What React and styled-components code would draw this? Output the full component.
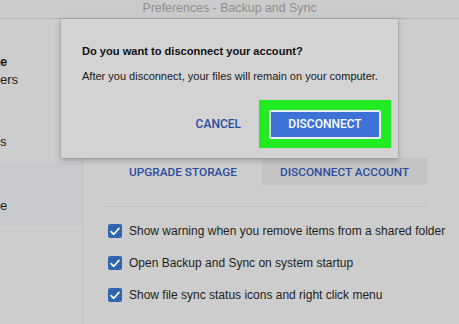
import styled, { createGlobalStyle } from "styled-components";

const GlobalStyle = createGlobalStyle`
    html, body {
        margin: 0;
        padding: 0;
        background-color: #cdcdcd;
    }
    * {
        box-sizing: border-box;
    }
`

const checks = [
    "Show warning when you remove items from a shared folder",
    "Open Backup and Sync on system startup",
    "Show file sync status icons and right click menu"
];

function CheckIcon() {
    return (
        <svg width="10" height="9" viewBox="0 0 10 9">
            <path d="M1 4.6 L3.8 7.3 L9 1.4" fill="none" stroke="#ffffff" strokeWidth="1.6" strokeLinecap="round" strokeLinejoin="round" />
        </svg>
    )
}

export default function App() {
    return (
        <Window>
            <GlobalStyle />
            <TitleBar>Preferences - Backup and Sync</TitleBar>
            <Body>
                <Sidebar>
                    <SideItem top={36}>
                        <b>e</b>
                        <span>ers</span>
                    </SideItem>
                    <SideItem top={48}>
                        <span>s</span>
                    </SideItem>
                    <SideItem top={14} selected>
                        <span>e</span>
                    </SideItem>
                </Sidebar>

                <Content>
                    <ButtonRow>
                        <FlatButton>UPGRADE STORAGE</FlatButton>
                        <FlatButton filled>DISCONNECT ACCOUNT</FlatButton>
                    </ButtonRow>
                    <Divider />
                    <CheckList>
                        {checks.map((text) => (
                            <CheckRow key={text}>
                                <Box><CheckIcon /></Box>
                                <span>{text}</span>
                            </CheckRow>
                        ))}
                    </CheckList>
                </Content>
            </Body>

            <Dialog>
                <h1>Do you want to disconnect your account?</h1>
                <p>After you disconnect, your files will remain on your computer.</p>
                <DialogActions>
                    <TextButton>CANCEL</TextButton>
                    <Highlight>
                        <PrimaryButton>DISCONNECT</PrimaryButton>
                    </Highlight>
                </DialogActions>
            </Dialog>
        </Window>
    )
}

const Window = styled.div`
    position: relative;
    width: 459px;
    height: 324px;
    overflow: hidden;
    background-color: #cdcdcd;
    font-family: "Liberation Sans", Arial, sans-serif;
    display: flex;
    flex-direction: column;
`

const TitleBar = styled.div`
    height: 19px;
    flex-shrink: 0;
    border-bottom: 1px solid #b4b4b4;
    background-color: #cbcbcb;
    color: #8e8e8e;
    font-size: 12.4px;
    line-height: 17px;
    text-align: center;
`

const Body = styled.div`
    flex: 1;
    display: flex;
`

const Sidebar = styled.div`
    width: 83px;
    flex-shrink: 0;
    border-right: 1px solid #bdbdbd;
    background-color: #cdcdcd;
    display: flex;
    flex-direction: column;
`

const SideItem = styled.div`
    margin-top: ${props => props.top}px;
    height: ${props => props.selected ? "62px" : "auto"};
    background-color: ${props => props.selected ? "#c7c9ce" : "transparent"};
    padding-top: ${props => props.selected ? "36px" : "0"};
    display: flex;
    flex-direction: column;
    gap: 4px;
    font-size: 13px;
    color: #1c1c1c;

    b {
        font-weight: 700;
        line-height: 14px;
    }
    span {
        line-height: 14px;
    }
`

const Content = styled.div`
    flex: 1;
    padding: 139px 0 0 22px;
    display: flex;
    flex-direction: column;
`

const ButtonRow = styled.div`
    display: flex;
    gap: 7px;
    margin-left: 6px;
`

const FlatButton = styled.div`
    height: 27px;
    padding: 0 18px;
    display: flex;
    align-items: center;
    background-color: ${props => props.filled ? "#c4c4c4" : "transparent"};
    color: #2b4c9e;
    font-family: Roboto, "Liberation Sans", sans-serif;
    font-size: 11.8px;
    font-weight: 500;
    white-space: nowrap;
`

const Divider = styled.div`
    width: 322px;
    height: 1px;
    margin-top: 21px;
    background-color: #c3c3c3;
`

const CheckList = styled.div`
    margin-top: 17px;
    display: flex;
    flex-direction: column;
    gap: 18px;
`

const CheckRow = styled.div`
    display: flex;
    align-items: center;
    gap: 7px;
    margin-left: 3px;
    font-size: 12px;
    color: #1e1e1e;
    height: 14px;
    white-space: nowrap;
`

const Box = styled.div`
    width: 14px;
    height: 14px;
    flex-shrink: 0;
    border-radius: 2px;
    background-color: #2f66ad;
    display: flex;
    align-items: center;
    justify-content: center;
`

const Dialog = styled.div`
    position: absolute;
    left: 61px;
    top: 19px;
    width: 337px;
    height: 139px;
    background-color: #d3d3d3;
    box-shadow: 0 2px 6px rgba(0, 0, 0, 0.25), 0 0 1px rgba(0, 0, 0, 0.3);
    padding: 25px 0 0 21px;
    display: flex;
    flex-direction: column;

    h1 {
        margin: 0;
        font-size: 11.1px;
        font-weight: 700;
        color: #111111;
        line-height: 14px;
    }
    p {
        margin: 11px 0 0 0;
        font-size: 11px;
        color: #1a1a1a;
        line-height: 14px;
    }
`

const DialogActions = styled.div`
    margin-top: 17px;
    margin-right: 7px;
    display: flex;
    justify-content: flex-end;
    align-items: center;
    gap: 18px;
`

const TextButton = styled.div`
    color: #2b4c9e;
    font-family: Roboto, "Liberation Sans", sans-serif;
    font-size: 12px;
    font-weight: 500;
`

const Highlight = styled.div`
    width: 132px;
    height: 48px;
    background-color: #22ec22;
    display: flex;
    align-items: center;
    justify-content: center;
`

const PrimaryButton = styled.div`
    width: 112px;
    height: 29px;
    border: 2px solid #e6eef8;
    border-radius: 2px;
    background-color: #3d72d6;
    color: #ffffff;
    font-family: Roboto, "Liberation Sans", sans-serif;
    font-size: 12px;
    font-weight: 500;
    display: flex;
    align-items: center;
    justify-content: center;
`
